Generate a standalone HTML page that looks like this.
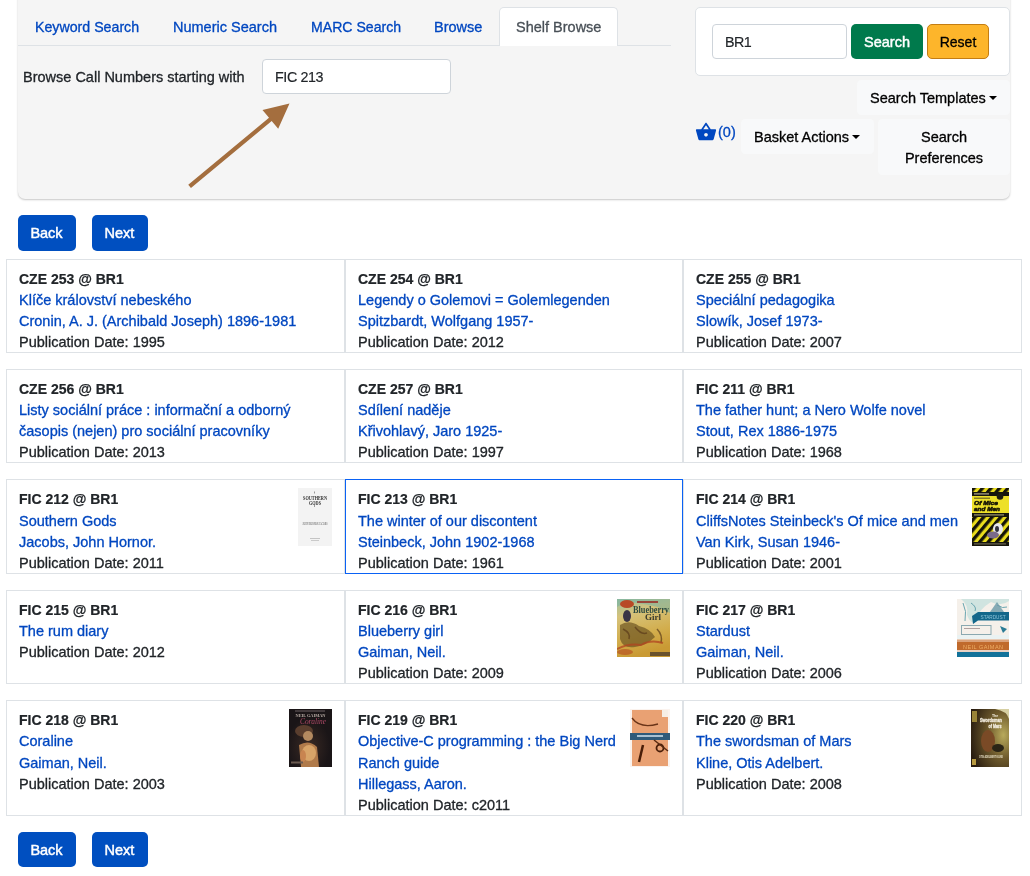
<!DOCTYPE html>
<html><head><meta charset="utf-8">
<style>
*{box-sizing:border-box}
html,body{margin:0;padding:0;background:#fff;width:1030px;height:876px;overflow:hidden}
body{font-family:"Liberation Sans",sans-serif;font-size:14.5px;line-height:21px;color:#212529;position:relative;-webkit-text-stroke:0.3px currentColor}
.abs{position:absolute;white-space:nowrap}
#panel{position:absolute;left:18px;top:-12px;width:992px;height:211px;background:#f5f5f5;border-radius:7px;box-shadow:0 1px 2px rgba(0,0,0,.22),0 0 1px rgba(0,0,0,.08)}
.tabline{position:absolute;left:18px;top:45px;width:653px;height:1px;background:#dee2e6}
.tab{color:#0047c0}
#activetab{position:absolute;left:499px;top:7px;width:119px;height:39px;background:#fff;border:1px solid #dee2e6;border-bottom:none;border-radius:5px 5px 0 0}
.inp{position:absolute;background:#fff;border:1px solid #ced4da;border-radius:4px}
.btn{position:absolute;border-radius:5px;text-align:center}
.blue{background:#004fc0;color:#fff;-webkit-text-stroke:0.45px #fff;text-indent:-1px}
.light{position:absolute;background:#f8f9fa;border-radius:4.5px}
.caret{display:inline-block;width:0;height:0;border-top:4.5px solid #000;border-left:4px solid transparent;border-right:4px solid transparent;vertical-align:3px;margin-left:3px}
.cell{position:absolute;border:1px solid #dee2e6;background:#fff;padding:9px 12px 0 12px}
.cell b{display:block;font-weight:700;font-size:14px;color:#212529;-webkit-text-stroke:0.2px #212529}
.cell a{display:block;color:#0047c0;text-decoration:none}
.cell div{white-space:nowrap}
.th{position:absolute}
.sel{border-color:#0a62f5}
a{color:#0047c0;text-decoration:none}
</style></head>
<body><div id="wrap" style="will-change:transform;position:absolute;left:0;top:0;width:1030px;height:876px">
<div id="panel"></div>
<div class="tabline"></div>
<div id="activetab"></div>
<span class="abs tab" style="left:35px;top:17px;font-size:14.2px">Keyword Search</span>
<span class="abs tab" style="left:173px;top:17px">Numeric Search</span>
<span class="abs tab" style="left:311px;top:17px;font-size:14.1px">MARC Search</span>
<span class="abs tab" style="left:434px;top:17px">Browse</span>
<span class="abs" style="left:516px;top:17px;color:#495057">Shelf Browse</span>

<span class="abs" style="left:23px;top:67px">Browse Call Numbers starting with</span>
<div class="inp" style="left:262px;top:59px;width:189px;height:35px"></div>
<span class="abs" style="left:275px;top:67px;font-size:14.3px;letter-spacing:-0.4px;-webkit-text-stroke:0.15px #212529">FIC 213</span>

<svg class="abs" style="left:0;top:0" width="1030" height="210">
<path d="M188.26,184.79 L269.0,117.74 L262.5,109.9 L289.5,103.4 L278.2,128.8 L271.69,120.96 L190.94,188.01 Z" fill="#a46e3e"/>
</svg>

<!-- right card -->
<div class="abs" style="left:695px;top:7px;width:315px;height:69px;background:#fff;border:1px solid #dee2e6;border-radius:5px"></div>
<div class="inp" style="left:712px;top:24px;width:135px;height:35px"></div>
<span class="abs" style="left:725px;top:32px;font-size:14.3px;letter-spacing:-0.6px;-webkit-text-stroke:0.15px #212529">BR1</span>
<div class="btn" style="left:851px;top:24px;width:72px;height:35px;background:#007a4c;color:#fff;-webkit-text-stroke:0.45px #fff;line-height:37px">Search</div>
<div class="btn" style="left:927px;top:24px;width:62px;height:35px;background:#fdb52b;border:1px solid #c47d12;color:#000;line-height:35px;font-size:14px">Reset</div>

<div class="light" style="left:857px;top:80px;width:153px;height:35px"></div>
<span class="abs" style="left:870px;top:88px;color:#000">Search Templates<i class="caret"></i></span>

<svg class="abs" style="left:695.1px;top:121.2px" width="22" height="22" viewBox="0 0 24 24"><path fill="#0047c0" d="M17.21 9l-4.38-6.56c-.19-.28-.51-.42-.83-.42-.32 0-.64.14-.83.43L6.79 9H2c-.55 0-1 .45-1 1 0 .09.01.18.04.27l2.54 9.27c.23.84 1 1.46 1.92 1.46h13c.92 0 1.69-.62 1.93-1.46l2.54-9.27L23 10c0-.55-.45-1-1-1h-4.79zM9 9l3-4.4L15 9H9zm3 8c-1.1 0-2-.9-2-2s.9-2 2-2 2 .9 2 2-.9 2-2 2z"/></svg>
<span class="abs" style="left:718px;top:122px;color:#0047c0">(0)</span>
<div class="light" style="left:741px;top:119px;width:133px;height:35px"></div>
<span class="abs" style="left:754px;top:127px;color:#000">Basket Actions<i class="caret"></i></span>
<div class="light" style="left:878px;top:119px;width:132px;height:56px"></div>
<span class="abs" style="left:878px;top:127px;width:132px;text-align:center;color:#000;white-space:normal">Search<br>Preferences</span>

<div class="btn blue" style="left:18px;top:215px;width:58px;height:36px;line-height:36px">Back</div>
<div class="btn blue" style="left:92px;top:215px;width:56px;height:36px;line-height:36px">Next</div>

<div id="grid">
<div class="cell" style="left:6px;top:259px;width:339px;height:94px"><b>CZE 253 @ BR1</b><a>Klíče království nebeského</a><a>Cronin, A. J. (Archibald Joseph) 1896-1981</a><div>Publication Date: 1995</div></div>
<div class="cell" style="left:345px;top:259px;width:338px;height:94px"><b>CZE 254 @ BR1</b><a>Legendy o Golemovi = Golemlegenden</a><a>Spitzbardt, Wolfgang 1957-</a><div>Publication Date: 2012</div></div>
<div class="cell" style="left:683px;top:259px;width:339px;height:94px"><b>CZE 255 @ BR1</b><a>Speciální pedagogika</a><a>Slowík, Josef 1973-</a><div>Publication Date: 2007</div></div>
<div class="cell" style="left:6px;top:369px;width:339px;height:94px"><b>CZE 256 @ BR1</b><a>Listy sociální práce : informační a odborný<br>časopis (nejen) pro sociální pracovníky</a><div>Publication Date: 2013</div></div>
<div class="cell" style="left:345px;top:369px;width:338px;height:94px"><b>CZE 257 @ BR1</b><a>Sdílení naděje</a><a>Křivohlavý, Jaro 1925-</a><div>Publication Date: 1997</div></div>
<div class="cell" style="left:683px;top:369px;width:339px;height:94px"><b>FIC 211 @ BR1</b><a>The father hunt; a Nero Wolfe novel</a><a>Stout, Rex 1886-1975</a><div>Publication Date: 1968</div></div>
<div class="cell" style="left:6px;top:479px;width:339px;height:95px"><b>FIC 212 @ BR1</b><a style="margin-top:1px">Southern Gods</a><a>Jacobs, John Hornor.</a><div>Publication Date: 2011</div></div>
<div class="cell sel" style="left:345px;top:479px;width:338px;height:95px"><b>FIC 213 @ BR1</b><a style="margin-top:1px">The winter of our discontent</a><a>Steinbeck, John 1902-1968</a><div>Publication Date: 1961</div></div>
<div class="cell" style="left:683px;top:479px;width:339px;height:95px"><b>FIC 214 @ BR1</b><a style="margin-top:1px">CliffsNotes Steinbeck's Of mice and men</a><a>Van Kirk, Susan 1946-</a><div>Publication Date: 2001</div></div>
<div class="cell" style="left:6px;top:590px;width:339px;height:94px"><b>FIC 215 @ BR1</b><a>The rum diary</a><div>Publication Date: 2012</div></div>
<div class="cell" style="left:345px;top:590px;width:338px;height:94px"><b>FIC 216 @ BR1</b><a>Blueberry girl</a><a>Gaiman, Neil.</a><div>Publication Date: 2009</div></div>
<div class="cell" style="left:683px;top:590px;width:339px;height:94px"><b>FIC 217 @ BR1</b><a>Stardust</a><a>Gaiman, Neil.</a><div>Publication Date: 2006</div></div>
<div class="cell" style="left:6px;top:700px;width:339px;height:116px"><b>FIC 218 @ BR1</b><a>Coraline</a><a style="margin-top:1px">Gaiman, Neil.</a><div>Publication Date: 2003</div></div>
<div class="cell" style="left:345px;top:700px;width:338px;height:116px"><b>FIC 219 @ BR1</b><a>Objective-C programming : the Big Nerd</a><a style="margin-top:1px">Ranch guide</a><a>Hillegass, Aaron.</a><div>Publication Date: c2011</div></div>
<div class="cell" style="left:683px;top:700px;width:339px;height:116px"><b>FIC 220 @ BR1</b><a>The swordsman of Mars</a><a style="margin-top:1px">Kline, Otis Adelbert.</a><div>Publication Date: 2008</div></div>
</div><!--/grid-->

<div class="btn blue" style="left:18px;top:832px;width:58px;height:35px;line-height:37px">Back</div>
<div class="btn blue" style="left:92px;top:832px;width:56px;height:35px;line-height:37px">Next</div>
<!--thumbs-->
<svg class="th" style="left:298px;top:488px" width="34" height="58" viewBox="0 0 34 58">
<rect width="34" height="58" fill="#f3f3f3"/>
<text x="17" y="11.5" text-anchor="middle" font-family="Liberation Serif" font-weight="700" font-size="5.6" fill="#333" textLength="24" lengthAdjust="spacingAndGlyphs" style="-webkit-text-stroke:0">SOUTHERN</text>
<text x="17" y="16.5" text-anchor="middle" font-family="Liberation Serif" font-weight="700" font-size="5.6" fill="#333" textLength="12" lengthAdjust="spacingAndGlyphs" style="-webkit-text-stroke:0">GODS</text>
<rect x="16" y="3.5" width="1" height="2" fill="#999"/><rect x="16" y="17" width="1" height="2" fill="#999"/>
<text x="17" y="37" text-anchor="middle" font-family="Liberation Serif" font-size="3" fill="#555" textLength="25" lengthAdjust="spacingAndGlyphs" style="-webkit-text-stroke:0">JOHN HORNOR JACOBS</text>
<rect x="12" y="50" width="10" height="1" fill="#c4c4c4"/><rect x="13" y="52" width="8" height="1" fill="#cacaca"/>
</svg>
<svg class="th" style="left:972px;top:488px" width="37" height="58" viewBox="0 0 37 58">
<defs><pattern id="st" width="6.5" height="6.5" patternUnits="userSpaceOnUse" patternTransform="rotate(40)"><rect width="6.5" height="6.5" fill="#e9dc1c"/><rect width="3.3" height="6.5" fill="#14130a"/></pattern></defs>
<rect width="37" height="58" fill="url(#st)"/>
<rect y="4" width="37" height="4" fill="#16150c"/>
<rect x="2" y="5.2" width="15" height="1.4" fill="#9a9478"/>
<rect y="8" width="37" height="17" fill="#ede028"/>
<circle cx="28" cy="8.5" r="3.3" fill="#1c1b10"/>
<rect x="2" y="9.6" width="16" height="1.2" fill="#6a6428"/>
<text x="2" y="17" font-family="Liberation Sans" font-weight="700" font-style="italic" font-size="6.2" fill="#1a1806" stroke="#1a1806" stroke-width=".6" textLength="24" lengthAdjust="spacingAndGlyphs" style="-webkit-text-stroke:0">Of Mice</text>
<text x="2" y="23" font-family="Liberation Sans" font-weight="700" font-style="italic" font-size="6.2" fill="#1a1806" stroke="#1a1806" stroke-width=".6" textLength="26" lengthAdjust="spacingAndGlyphs" style="-webkit-text-stroke:0">and Men</text>
<rect y="25" width="37" height="4" fill="#16150c"/>
<rect x="2" y="26.2" width="30" height="1.4" fill="#8a8460"/>
<ellipse cx="26" cy="41" rx="5" ry="6" fill="#e6e6ee"/>
<ellipse cx="25" cy="41" rx="2" ry="3" fill="#303040"/>
<ellipse cx="21" cy="47" rx="6" ry="3.5" fill="#7a6a8a"/>
<rect y="54" width="37" height="4" fill="#16150c"/>
<rect x="2" y="55.3" width="32" height="1.2" fill="#6a6650"/>
</svg>
<svg class="th" style="left:617px;top:599px" width="53" height="58" viewBox="0 0 53 58">
<defs><linearGradient id="bgg" x1="0" y1="0" x2=".25" y2="1"><stop offset="0" stop-color="#9cc0a0"/><stop offset=".3" stop-color="#d6c27a"/><stop offset=".7" stop-color="#d2ad4c"/><stop offset="1" stop-color="#c99a34"/></linearGradient></defs>
<rect width="53" height="58" fill="url(#bgg)"/>
<path d="M0 0 H53 V14 Q40 6 20 4 Q8 3 0 8 Z" fill="#78b0a0" opacity=".55"/>
<ellipse cx="10" cy="5" rx="7" ry="4" fill="#b84a26"/>
<rect x="20" y="2" width="21" height="2" fill="#9a3028" opacity=".85"/>
<text x="34" y="14" text-anchor="middle" font-family="Liberation Serif" font-weight="700" font-size="10" fill="#2d4a40" textLength="36" lengthAdjust="spacingAndGlyphs" style="-webkit-text-stroke:0">Blueberry</text>
<text x="36" y="21" text-anchor="middle" font-family="Liberation Serif" font-weight="700" font-size="8" fill="#3a3a2e" textLength="16" lengthAdjust="spacingAndGlyphs" style="-webkit-text-stroke:0">Girl</text>
<ellipse cx="10" cy="17" rx="4" ry="6" fill="#3a3446"/>
<path d="M3 26 Q12 20 22 27 Q34 30 38 38 Q30 46 18 48 Q6 50 3 40 Z" fill="#6e5522" opacity=".7"/>
<path d="M6 30 Q14 34 12 40 M18 28 Q24 36 30 34 M40 30 Q46 36 44 44" stroke="#5a3a1a" stroke-width="1.5" fill="none" opacity=".7"/>
<path d="M0 50 Q12 44 24 46 Q34 40 46 44" stroke="#b04420" stroke-width="2" fill="none" opacity=".75"/>
<ellipse cx="8" cy="53" rx="8" ry="3" fill="#b4481e" opacity=".6"/>
<rect x="33" y="53" width="20" height="4" fill="#4a3a2a" opacity=".75"/>
</svg>
<svg class="th" style="left:957px;top:599px" width="52" height="58" viewBox="0 0 52 58">
<rect width="52" height="58" fill="#f5f0ea"/>
<path d="M4 0 Q12 6 10 16 Q14 26 18 22 Q22 10 34 3 Q44 8 52 2 V0 Z" fill="#b8dcd8" opacity=".6"/>
<path d="M6 4 Q10 12 8 22 M14 4 Q20 8 18 12 M40 6 Q46 10 50 8" stroke="#6aa6b0" stroke-width="1" fill="none"/>
<path d="M33 13 L40 3 L47 13 Z" fill="#6a9aa8" opacity=".8"/>
<path d="M15 17 L21 13 L52 13 V21.5 L21 21.5 L16 25 Z" fill="#13678a"/>
<text x="36" y="20" text-anchor="middle" font-family="Liberation Sans" font-size="6" fill="#8cc4d8" textLength="25" lengthAdjust="spacingAndGlyphs" style="-webkit-text-stroke:0">STARDUST</text>
<rect x="4.5" y="26.5" width="29.5" height="9" fill="none" stroke="#8aa8b0" stroke-width="1"/>
<rect x="7" y="29" width="16" height="1" fill="#b0a0a0"/>
<path d="M43 27 L50 30 L46 34 Z" fill="#2a7b95"/>
<rect y="36" width="52" height="4" fill="#eaf2f2"/>
<rect y="40.5" width="52" height="2.5" fill="#dba27a"/>
<rect y="43" width="52" height="8" fill="#c06a2c"/>
<text x="26" y="49.5" text-anchor="middle" font-family="Liberation Sans" font-size="5.5" fill="#eeae64" textLength="40" lengthAdjust="spacing" style="-webkit-text-stroke:0">NEIL GAIMAN</text>
<rect y="51" width="52" height="2" fill="#e8d2c4"/>
<rect y="53" width="52" height="5" fill="#12729a"/>
</svg>
<svg class="th" style="left:289px;top:709px" width="43" height="58" viewBox="0 0 43 58">
<defs><radialGradient id="cog" cx=".45" cy=".65" r=".5"><stop offset="0" stop-color="#3a2a24"/><stop offset="1" stop-color="#1a1517"/></radialGradient></defs>
<rect width="43" height="58" fill="url(#cog)"/>
<rect x="6" y="1.5" width="30" height="1" fill="#6a6062"/>
<text x="21.5" y="7.5" text-anchor="middle" font-family="Liberation Serif" font-weight="700" font-size="4.5" fill="#b8aca4" textLength="30" lengthAdjust="spacingAndGlyphs" style="-webkit-text-stroke:0">NEIL GAIMAN</text>
<text x="24" y="15" text-anchor="middle" font-family="Liberation Serif" font-style="italic" font-size="9" fill="#b04a68" textLength="26" lengthAdjust="spacingAndGlyphs" style="-webkit-text-stroke:0">Coraline</text>
<ellipse cx="15" cy="22" rx="9" ry="6" fill="#5a3e2e"/>
<ellipse cx="19" cy="27" rx="5" ry="5" fill="#b48a60"/>
<path d="M10 36 Q20 30 28 38 L30 58 L12 58 Z" fill="#b07a4a"/>
<ellipse cx="20" cy="44" rx="7" ry="8" fill="#d8a468"/>
<ellipse cx="14" cy="47" rx="3" ry="6" fill="#c88450"/>
<rect x="2" y="52.5" width="12" height="2" fill="#6a5a50"/>
</svg>
<svg class="th" style="left:630px;top:709px" width="40" height="58" viewBox="0 0 40 58">
<rect width="40" height="58" fill="#fbf3ee"/>
<rect x="2" y="1" width="36" height="56" fill="#e9a173"/>
<rect x="32" y="1" width="6" height="7" fill="#f6eee6"/>
<path d="M2 9 Q10 20 28 15" stroke="#6a3418" stroke-width="1.3" fill="none"/>
<rect x="0" y="24" width="40" height="7" fill="#2f5a7a"/>
<rect x="7" y="26" width="26" height="2" fill="#a8c0d2"/>
<path d="M9 53 L13 36" stroke="#4a1e08" stroke-width="2.5"/>
<circle cx="30" cy="39" r="3.5" fill="none" stroke="#4a1e08" stroke-width="1.8"/>
<path d="M24 31 L38 42" stroke="#5a2a10" stroke-width="1.5"/>
</svg>
<svg class="th" style="left:971px;top:709px" width="38" height="58" viewBox="0 0 38 58">
<defs><radialGradient id="smg" cx=".85" cy=".45" r=".9"><stop offset="0" stop-color="#b8aa5c"/><stop offset=".45" stop-color="#6e5a2c"/><stop offset="1" stop-color="#281c10"/></radialGradient></defs>
<rect width="38" height="58" fill="url(#smg)"/>
<path d="M24 0 Q36 2 38 10 V0 Z" fill="#d6cfa2"/>
<text x="24" y="8" text-anchor="middle" font-family="Liberation Sans" font-weight="700" font-size="3.5" fill="#f0eadc" style="-webkit-text-stroke:0">The</text>
<text x="20" y="13" text-anchor="middle" font-family="Liberation Sans" font-weight="700" font-size="6" fill="#f0eadc" stroke="#f0eadc" stroke-width=".4" textLength="22" lengthAdjust="spacingAndGlyphs" style="-webkit-text-stroke:0">Swordsman</text>
<text x="24" y="18.5" text-anchor="middle" font-family="Liberation Sans" font-weight="700" font-size="6" fill="#f0eadc" stroke="#f0eadc" stroke-width=".4" textLength="13" lengthAdjust="spacingAndGlyphs" style="-webkit-text-stroke:0">of Mars</text>
<rect x="1" y="2" width="5" height="11" fill="#9a8438"/>
<ellipse cx="17" cy="32" rx="7" ry="11" fill="#7a4a26"/>
<ellipse cx="27" cy="39" rx="6" ry="4" fill="#2a2416"/>
<text x="20" y="49" text-anchor="middle" font-family="Liberation Sans" font-weight="700" font-size="3.6" fill="#e6dec4" textLength="24" lengthAdjust="spacingAndGlyphs" style="-webkit-text-stroke:0">OTIS ADELBERT KLINE</text>
<rect x="1" y="50" width="4" height="6" fill="#b89a40"/>
</svg>
<!--/thumbs-->
</div></body></html>
